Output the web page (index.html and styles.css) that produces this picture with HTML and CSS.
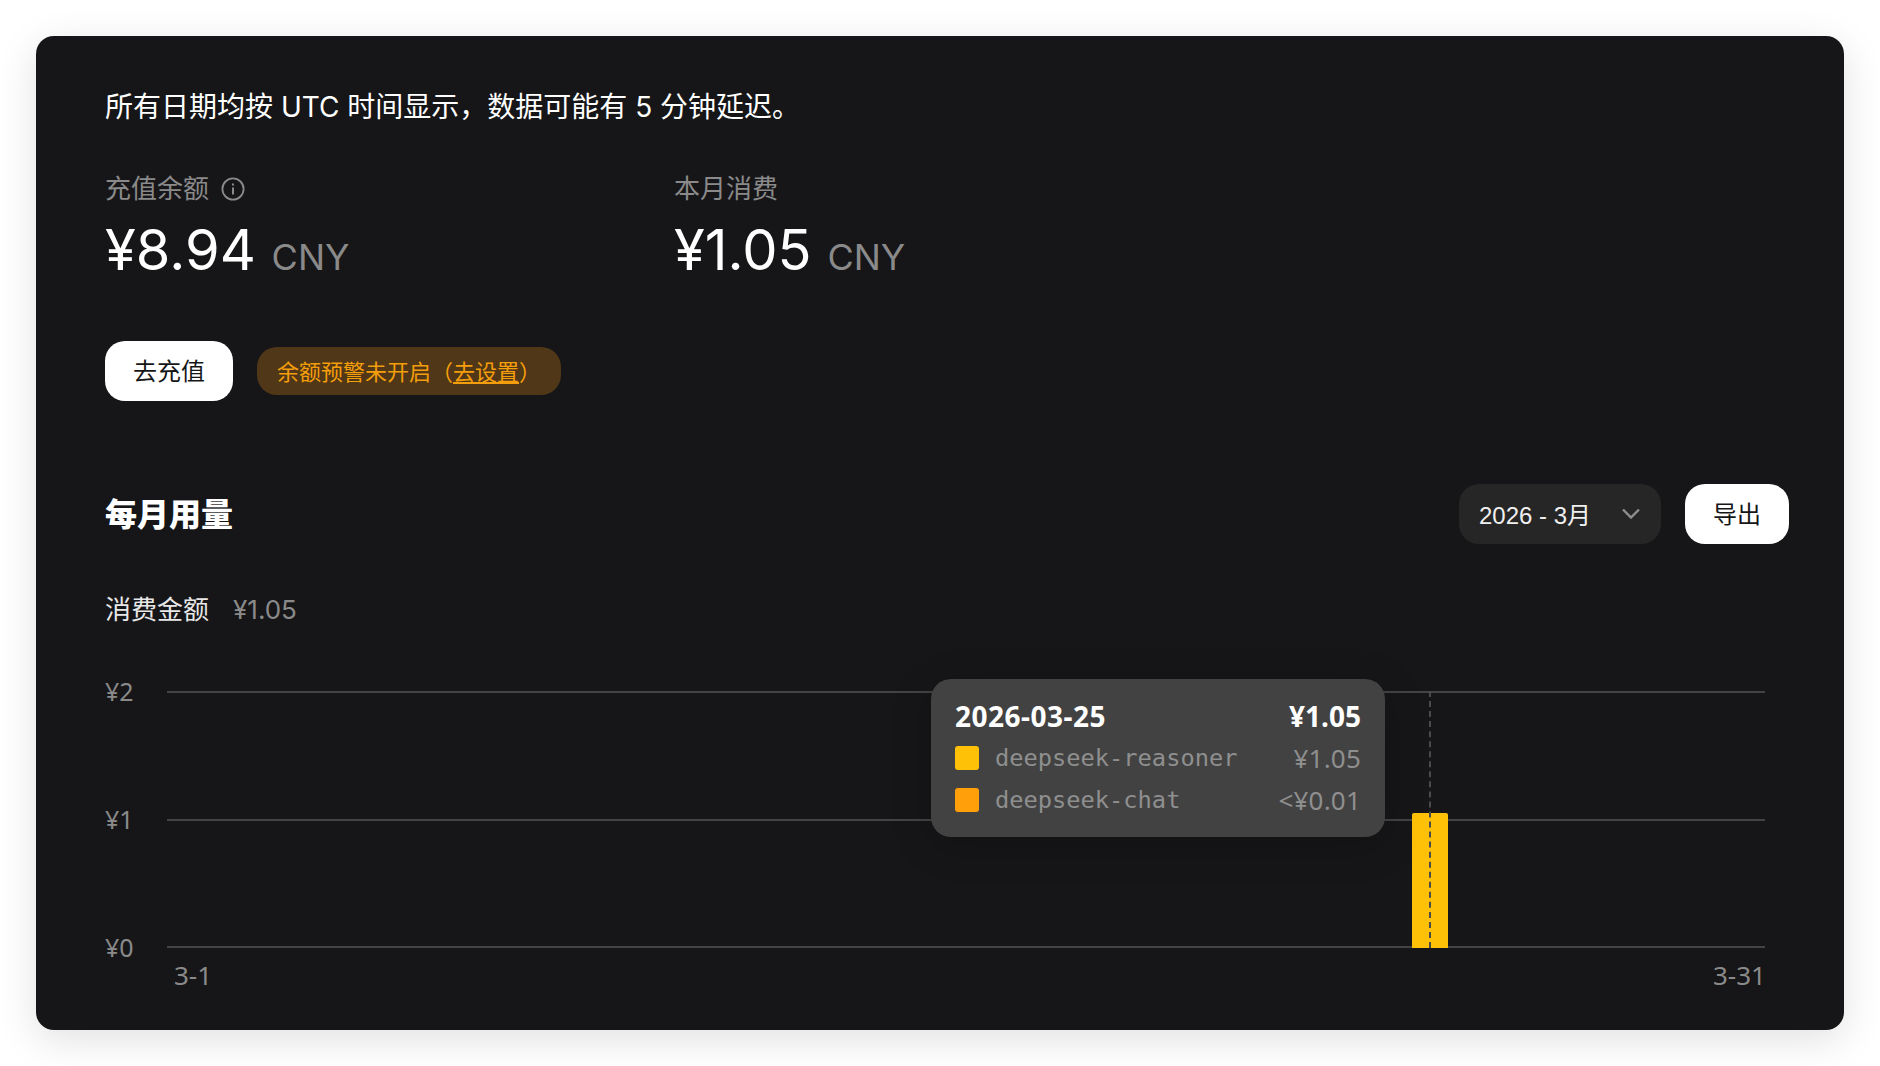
FILE: index.html
```html
<!DOCTYPE html>
<html lang="zh-CN">
<head>
    <meta charset="UTF-8">
    <title>用量信息</title>
    <link rel="stylesheet" href="styles.css">
</head>
<body>
    <div class="card">
        <p class="notice">所有日期均按 UTC 时间显示，数据可能有 5 分钟延迟。</p>

        <div class="stats">
            <div class="stat">
                <div class="stat-label">
                    充值余额
                    <svg class="info-icon" width="24" height="24" viewBox="0 0 24 24" fill="none" stroke="currentColor" stroke-width="1.8">
                        <circle cx="12" cy="12" r="10.6"/>
                        <path d="M12 10.5v7" stroke-width="2"/>
                        <path d="M12 6.5v2" stroke-width="2"/>
                    </svg>
                </div>
                <div class="stat-value">¥8.94 <span class="unit">CNY</span></div>
            </div>
            <div class="stat">
                <div class="stat-label">本月消费</div>
                <div class="stat-value">¥1.05 <span class="unit">CNY</span></div>
            </div>
        </div>

        <div class="actions">
            <button class="white-button">去充值</button>
            <div class="warning-pill">余额预警未开启（<a href="#">去设置</a>）</div>
        </div>

        <div class="usage-header">
            <h2>每月用量</h2>
            <div class="usage-tools">
                <div class="month-select">
                    <span>2026 - 3月</span>
                    <svg width="18" height="11" viewBox="0 0 18 11" fill="none" stroke="#8f8f8f" stroke-width="2.4">
                        <path d="M1 1.5l8 8 8-8"/>
                    </svg>
                </div>
                <button class="white-button">导出</button>
            </div>
        </div>

        <div class="total-row">
            <span class="total-label">消费金额</span>
            <span class="total-value">¥1.05</span>
        </div>

        <div class="chart">
            <div class="y-axis">
                <span>¥2</span>
                <span>¥1</span>
                <span>¥0</span>
            </div>
            <div class="plot-area">
                <div class="plot">
                    <div class="grid-line"></div>
                    <div class="grid-line"></div>
                    <div class="grid-line"></div>
                    <div class="bar"></div>
                    <div class="cursor-line"></div>
                    <div class="tooltip">
                        <div class="tooltip-row tooltip-title">
                            <span class="tooltip-date">2026-03-25</span>
                            <span>¥1.05</span>
                        </div>
                        <div class="tooltip-row">
                            <span class="swatch swatch-yellow"></span>
                            <span class="model">deepseek-reasoner</span>
                            <span class="amount">¥1.05</span>
                        </div>
                        <div class="tooltip-row">
                            <span class="swatch swatch-orange"></span>
                            <span class="model">deepseek-chat</span>
                            <span class="amount">&lt;¥0.01</span>
                        </div>
                    </div>
                </div>
                <div class="x-axis">
                    <span>3-1</span>
                    <span>3-31</span>
                </div>
            </div>
        </div>
    </div>
</body>
</html>
```

FILE: styles.css
```css
html, body {
    height: 100%;
}
body {
    margin: 0;
    padding: 36px;
    box-sizing: border-box;
    background-color: #ffffff;
    font-family: Inter, "Noto Sans CJK SC", sans-serif;
    overflow: hidden;
}
.card {
    height: 994px;
    box-sizing: border-box;
    padding: 51px 55px 0 69px;
    background-color: #161618;
    border-radius: 18px;
    box-shadow: 0 10px 40px rgba(0, 0, 0, 0.12);
    color: #ffffff;
}
.notice {
    margin: 0;
    font-size: 28px;
    line-height: 40px;
}
.stats {
    display: flex;
    margin-top: 44px;
}
.stat {
    width: 569px;
}
.stat-label {
    display: flex;
    align-items: center;
    gap: 12px;
    font-size: 26px;
    line-height: 36px;
    color: #8a8a8a;
}
.info-icon {
    flex: none;
}
.stat-value {
    font-size: 56px;
    line-height: 72px;
    margin-top: 7px;
}
.unit {
    font-size: 36px;
    color: #8a8a8a;
}
.actions {
    display: flex;
    align-items: center;
    gap: 24px;
    margin-top: 48px;
}
.white-button {
    height: 60px;
    padding: 0 28px 4px;
    border: none;
    border-radius: 20px;
    background-color: #ffffff;
    color: #161618;
    font-family: inherit;
    font-size: 24px;
}
.warning-pill {
    height: 48px;
    box-sizing: border-box;
    padding: 0 20px 2px;
    display: flex;
    align-items: center;
    border-radius: 20px;
    background-color: #4f3717;
    color: #f59e0b;
    font-size: 22px;
}
.warning-pill a {
    color: inherit;
}
.usage-header {
    display: flex;
    align-items: center;
    justify-content: space-between;
    margin-top: 83px;
}
.usage-header h2 {
    margin: 0 0 4px;
    font-size: 32px;
    font-weight: 900;
}
.usage-tools {
    display: flex;
    gap: 24px;
}
.month-select {
    width: 202px;
    height: 60px;
    box-sizing: border-box;
    padding: 0 21px 1px 20px;
    display: flex;
    align-items: center;
    justify-content: space-between;
    border-radius: 20px;
    background-color: #262626;
    font-family: "Liberation Sans", "Noto Sans CJK SC", sans-serif;
    font-size: 24px;
    color: #f0f0f0;
}
.total-row {
    display: flex;
    align-items: center;
    gap: 24px;
    margin-top: 48px;
    font-size: 26px;
    line-height: 36px;
}
.total-label {
    color: #e8e8e8;
}
.total-value {
    color: #8a8a8a;
}
.chart {
    display: flex;
    margin-top: 63px;
    font-family: "Noto Sans", "Noto Sans CJK SC", sans-serif;
    font-size: 25px;
    color: #8a8a8a;
}
.y-axis {
    width: 62px;
    height: 288px;
    display: flex;
    flex-direction: column;
    justify-content: space-between;
    margin-top: -16px;
    line-height: 32px;
}
.plot-area {
    width: 1598px;
}
.plot {
    position: relative;
    height: 257px;
    display: flex;
    flex-direction: column;
    justify-content: space-between;
}
.grid-line {
    height: 2px;
    background-color: #434343;
}
.bar {
    position: absolute;
    left: 1245px;
    bottom: 0;
    width: 36px;
    height: 135px;
    border-radius: 2px 2px 0 0;
    background-color: #ffc107;
}
.cursor-line {
    position: absolute;
    left: 1262px;
    top: 0;
    bottom: 0;
    width: 0;
    border-left: 2px dashed #4a4a4a;
}
.tooltip {
    position: absolute;
    left: 764px;
    top: -12px;
    width: 454px;
    height: 158px;
    box-sizing: border-box;
    padding: 15px 24px 16px;
    background-color: #424242;
    border-radius: 20px;
    box-shadow: 0 8px 40px rgba(0, 0, 0, 0.2);
}
.tooltip-row {
    display: flex;
    align-items: center;
    height: 42px;
}
.tooltip-title {
    justify-content: space-between;
    height: 43px;
    font-size: 28px;
    font-weight: 700;
    color: #ffffff;
}
.tooltip-date {
    letter-spacing: 0.5px;
}
.swatch {
    width: 24px;
    height: 24px;
    border-radius: 3px;
    margin-right: 16px;
}
.swatch-yellow {
    background-color: #ffc107;
}
.swatch-orange {
    background-color: #ff9f0a;
}
.model {
    flex: 1;
    font-family: "DejaVu Sans Mono", monospace;
    font-size: 23.7px;
    color: #8f8f8f;
}
.amount {
    font-size: 26px;
    letter-spacing: 0.2px;
    color: #8f8f8f;
}
.x-axis {
    display: flex;
    justify-content: space-between;
    margin-right: -1px;
    padding: 10px 0 0 7px;
    font-size: 26px;
    line-height: 34px;
}
```
